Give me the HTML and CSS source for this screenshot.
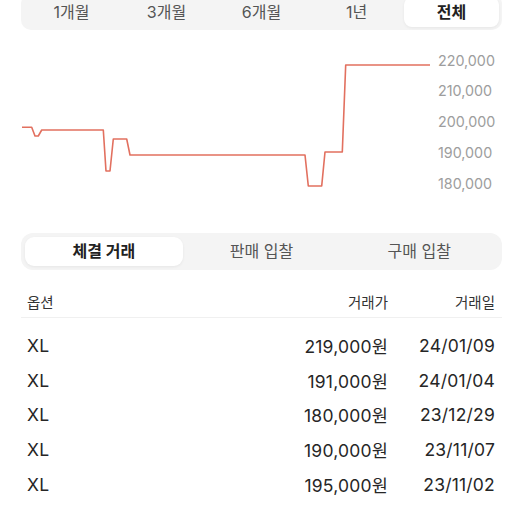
FILE: index.html
```html
<!DOCTYPE html>
<html lang="ko">
<head>
<meta charset="utf-8">
<link rel="stylesheet" href="styles.css">
</head>
<body>
<div class="page">
  <div class="period">
    <div class="period-item">1개월</div>
    <div class="period-item">3개월</div>
    <div class="period-item">6개월</div>
    <div class="period-item">1년</div>
    <div class="period-item active">전체</div>
  </div>

  <div class="chart">
    <svg class="chart-line" width="411" height="203" viewBox="0 0 411 203">
      <polyline fill="none" stroke="#e2705f" stroke-width="1.6" stroke-linejoin="round"
        points="1,97.3 10.7,97.3 14,106 17.3,106 20.7,100 82.3,100 85,141 89,141 92.3,109 105.7,109 109,125 284,125 287.3,156 300.7,156 304,122 321.3,122 324.7,35 409,35"/>
    </svg>
    <div class="axis">
      <div class="axis-label">220,000</div>
      <div class="axis-label">210,000</div>
      <div class="axis-label">200,000</div>
      <div class="axis-label">190,000</div>
      <div class="axis-label">180,000</div>
    </div>
  </div>

  <div class="tabs">
    <div class="tab active">체결 거래</div>
    <div class="tab">판매 입찰</div>
    <div class="tab">구매 입찰</div>
  </div>

  <div class="table">
    <div class="row head">
      <div class="c-opt">옵션</div>
      <div class="c-price">거래가</div>
      <div class="c-date">거래일</div>
    </div>
    <div class="rows">
      <div class="row">
        <div class="c-opt">XL</div>
        <div class="c-price">219,000원</div>
        <div class="c-date">24/01/09</div>
      </div>
      <div class="row">
        <div class="c-opt">XL</div>
        <div class="c-price">191,000원</div>
        <div class="c-date">24/01/04</div>
      </div>
      <div class="row">
        <div class="c-opt">XL</div>
        <div class="c-price">180,000원</div>
        <div class="c-date">23/12/29</div>
      </div>
      <div class="row">
        <div class="c-opt">XL</div>
        <div class="c-price">190,000원</div>
        <div class="c-date">23/11/07</div>
      </div>
      <div class="row">
        <div class="c-opt">XL</div>
        <div class="c-price">195,000원</div>
        <div class="c-date">23/11/02</div>
      </div>
    </div>
  </div>
</div>
</body>
</html>
```

FILE: styles.css
```css
* { box-sizing: border-box; }

html, body {
  margin: 0;
  padding: 0;
  background: #ffffff;
}

body {
  font-family: Inter, "Noto Sans CJK KR", sans-serif;
  color: #222222;
  overflow: hidden;
}

.page {
  padding: 0 23px 0 21px;
  margin-top: -6px;
}

/* period segmented control */
.period {
  display: grid;
  grid-template-columns: repeat(5, 1fr);
  background: #f4f4f4;
  border-radius: 10px;
  padding: 3px;
  height: 36px;
}

.period-item {
  display: flex;
  align-items: center;
  justify-content: center;
  font-size: 16px;
  line-height: 30px;
  color: #555555;
  border-radius: 8px;
}

.period-item.active {
  background: #ffffff;
  color: #222222;
  font-weight: 700;
  box-shadow: 0 1px 3px rgba(0, 0, 0, 0.06);
}

/* chart */
.chart {
  display: grid;
  grid-template-columns: 411px 1fr;
  height: 203px;
}

.chart-line {
  display: block;
}

.axis {
  padding-left: 6px;
  padding-top: 15.5px;
  display: flex;
  flex-direction: column;
}

.axis-label {
  font-size: 14.3px;
  line-height: 30.75px;
  color: #9d9d9d;
}

/* tabs */
.tabs {
  display: grid;
  grid-template-columns: repeat(3, 1fr);
  background: #f4f4f4;
  border-radius: 12px;
  padding: 4px;
  height: 37px;
}

.tab {
  display: flex;
  align-items: center;
  justify-content: center;
  font-size: 16px;
  line-height: 29px;
  color: #555555;
  border-radius: 9px;
}

.tab.active {
  background: #ffffff;
  color: #222222;
  font-weight: 700;
  box-shadow: 0 1px 3px rgba(0, 0, 0, 0.06);
}

/* table */
.table {
  margin-top: 16px;
}

.row {
  display: grid;
  grid-template-columns: 1fr auto 107px;
  align-items: center;
  padding: 0 7px 0 6px;
  height: 34.75px;
  font-size: 17.5px;
  letter-spacing: 0.2px;
  color: #262626;
}

.row.head {
  height: 32px;
  font-size: 14.5px;
  letter-spacing: 0;
  color: #333333;
  border-bottom: 1.5px solid #f0f0f0;
}

.rows {
  padding-top: 10px;
}

.c-price,
.c-date {
  text-align: right;
}
```
